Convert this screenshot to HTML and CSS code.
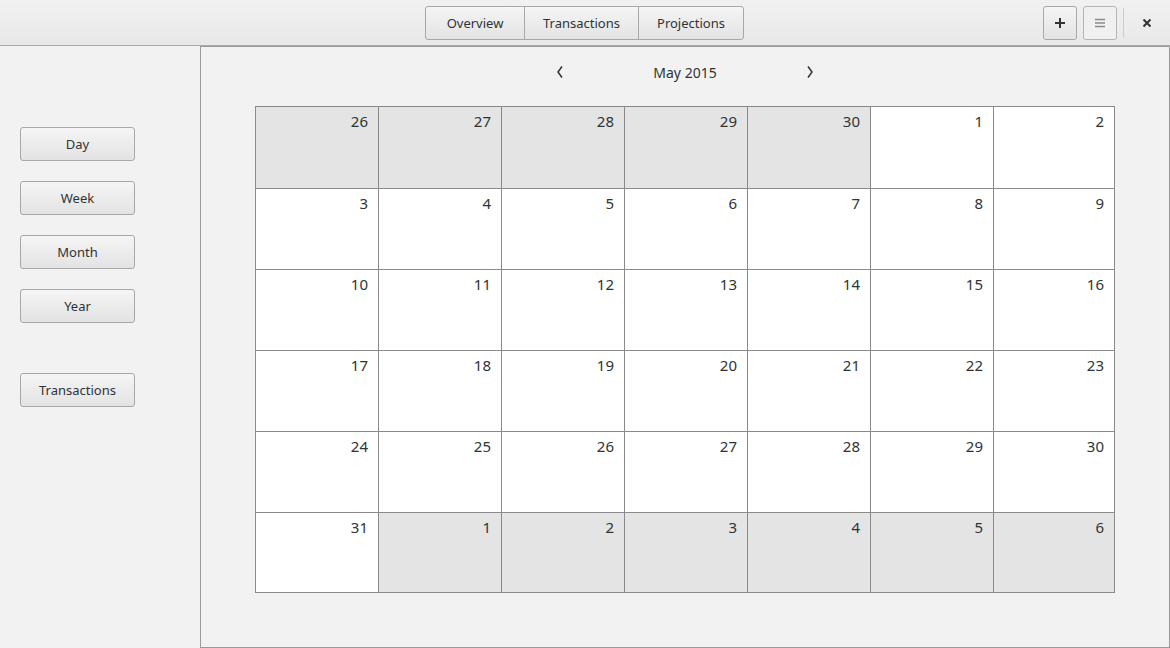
FILE: index.html
```html
<!DOCTYPE html>
<html>
<head>
<meta charset="utf-8">
<link rel="stylesheet" href="styles.css">
</head>
<body>
<header class="headerbar">
  <div class="hb-left"></div>
  <div class="switcher">
    <button class="btn seg">Overview</button>
    <button class="btn seg">Transactions</button>
    <button class="btn seg">Projections</button>
  </div>
  <div class="hb-right">
    <button class="btn icon-btn" aria-label="Add">
      <svg width="12" height="12" viewBox="0 0 12 12"><path d="M6 1v10M1 6h10" stroke="#2e3436" stroke-width="2"/></svg>
    </button>
    <button class="btn icon-btn menu-btn" aria-label="Menu">
      <svg width="12" height="12" viewBox="0 0 12 12"><path d="M1 2.5h10M1 6h10M1 9.5h10" stroke="#8a8a8a" stroke-width="1.6"/></svg>
    </button>
    <span class="sep"></span>
    <button class="close-btn" aria-label="Close">
      <svg width="10" height="10" viewBox="0 0 10 10"><path d="M1.5 1.5l7 7M8.5 1.5l-7 7" stroke="#2e3436" stroke-width="2"/></svg>
    </button>
  </div>
</header>
<div class="main">
  <aside class="sidebar">
    <button class="btn side">Day</button>
    <button class="btn side">Week</button>
    <button class="btn side">Month</button>
    <button class="btn side">Year</button>
    <button class="btn side side-gap">Transactions</button>
  </aside>
  <section class="frame">
    <div class="nav">
      <span class="arrow"><svg width="8" height="14" viewBox="0 0 8 14"><path d="M6 1.5L2 7l4 5.5" fill="none" stroke="#2e3436" stroke-width="1.5"/></svg></span>
      <span class="month">May 2015</span>
      <span class="arrow"><svg width="8" height="14" viewBox="0 0 8 14"><path d="M2 1.5L6 7l-4 5.5" fill="none" stroke="#2e3436" stroke-width="1.5"/></svg></span>
    </div>
    <div class="grid">
      <div class="cell out">26</div><div class="cell out">27</div><div class="cell out">28</div><div class="cell out">29</div><div class="cell out">30</div><div class="cell">1</div><div class="cell">2</div>
      <div class="cell">3</div><div class="cell">4</div><div class="cell">5</div><div class="cell">6</div><div class="cell">7</div><div class="cell">8</div><div class="cell">9</div>
      <div class="cell">10</div><div class="cell">11</div><div class="cell">12</div><div class="cell">13</div><div class="cell">14</div><div class="cell">15</div><div class="cell">16</div>
      <div class="cell">17</div><div class="cell">18</div><div class="cell">19</div><div class="cell">20</div><div class="cell">21</div><div class="cell">22</div><div class="cell">23</div>
      <div class="cell">24</div><div class="cell">25</div><div class="cell">26</div><div class="cell">27</div><div class="cell">28</div><div class="cell">29</div><div class="cell">30</div>
      <div class="cell">31</div><div class="cell out">1</div><div class="cell out">2</div><div class="cell out">3</div><div class="cell out">4</div><div class="cell out">5</div><div class="cell out">6</div>
    </div>
  </section>
</div>
</body>
</html>
```
FILE: styles.css
```css
* { box-sizing: border-box; }
html, body { margin: 0; padding: 0; }
body {
  width: 1170px;
  height: 648px;
  overflow: hidden;
  background: #f2f2f2;
  font-family: "Noto Sans", "Open Sans", sans-serif;
  color: #2e3436;
}
.headerbar {
  height: 46px;
  display: grid;
  grid-template-columns: 1fr auto 1fr;
  align-items: center;
  background: linear-gradient(#f1f1f1, #e8e8e8);
  border-bottom: 1px solid #a9a9a9;
}
.btn {
  font-family: inherit;
  font-size: 13px;
  color: #2e3436;
  height: 34px;
  border: 1px solid #a8a8a8;
  border-radius: 3px;
  background: linear-gradient(#f5f5f5, #e3e3e3);
  padding: 0;
  margin: 0;
  cursor: default;
}
.switcher {
  display: flex;
  padding-right: 1px;
}
.seg { border-radius: 0; margin-left: -1px; }
.seg:first-child { border-radius: 3px 0 0 3px; margin-left: 0; width: 100px; }
.seg:nth-child(2) { width: 115px; }
.seg:last-child { border-radius: 0 3px 3px 0; width: 106px; }
.hb-right {
  justify-self: end;
  display: flex;
  align-items: center;
  height: 100%;
}
.icon-btn {
  width: 34px;
  display: flex;
  align-items: center;
  justify-content: center;
  margin-right: 6px;
}
.menu-btn {
  background: #f0f0f0;
  border-color: #b5b5b5;
}
.sep {
  width: 1px;
  height: 30px;
  background: #cdcdcd;
}
.close-btn {
  width: 46px;
  height: 34px;
  border: 0;
  background: transparent;
  padding: 0;
  display: flex;
  align-items: center;
  justify-content: center;
}
.main {
  display: flex;
  height: 602px;
}
.sidebar {
  width: 200px;
  flex: none;
  padding: 81px 0 0 20px;
  display: flex;
  flex-direction: column;
  align-items: flex-start;
  gap: 20px;
}
.side { width: 115px; }
.side-gap { margin-top: 30px; }
.frame {
  width: 970px;
  height: 602px;
  border: 1px solid #9a9a9a;
  display: flex;
  flex-direction: column;
  align-items: center;
}
.nav {
  height: 50px;
  display: flex;
  align-items: center;
  justify-content: center;
}
.arrow {
  width: 24px;
  display: flex;
  justify-content: center;
}
.month {
  width: 226px;
  text-align: center;
  font-size: 14px;
}
.grid {
  margin-top: 9px;
  display: grid;
  grid-template-columns: repeat(6, 122px) 120px;
  grid-template-rows: 81px repeat(4, 80px) 79px;
  gap: 1px;
  padding: 1px;
  background: #8a8a8a;
}
.cell {
  background: #ffffff;
  text-align: right;
  padding: 5px 10px 0 0;
  font-size: 15px;
  line-height: 19px;
}
.cell.out { background: #e4e4e4; }
```
